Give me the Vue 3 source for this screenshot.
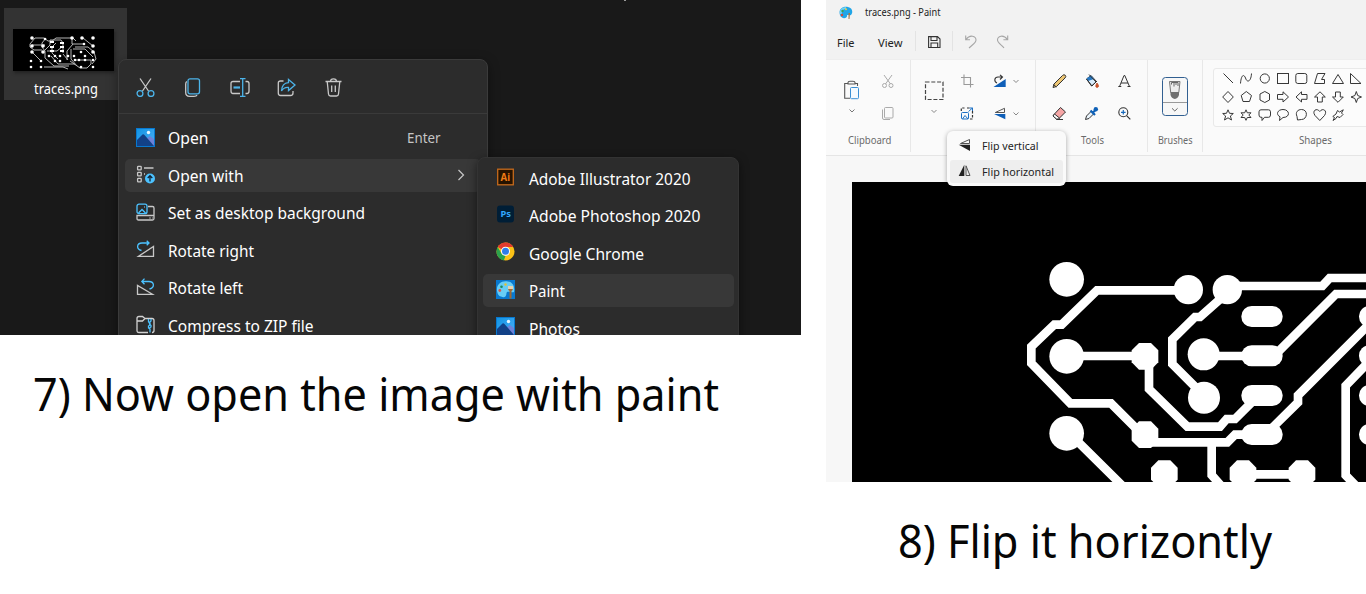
<script setup>
import { h } from 'vue'

// A single line of text fitted to an exact width.
const Fit = (p) =>
  h('svg', { class: 'fit', width: p.w, height: p.s * 1.5 }, [
    h('text', { x: 0, y: p.s * 1.107, 'font-size': p.s, textLength: p.w, lengthAdjust: 'spacingAndGlyphs' }, p.t)
  ])
Fit.props = ['t', 'w', 's']

const items = [
  { t: 'Open', w: 40.5, icon: 'photo', key: true },
  { t: 'Open with', w: 75.5, icon: 'with', active: true },
  { t: 'Set as desktop background', w: 197, icon: 'desk' },
  { t: 'Rotate right', w: 86, icon: 'right' },
  { t: 'Rotate left', w: 75, icon: 'left' },
  { t: 'Compress to ZIP file', w: 145.5, icon: 'zip' }
]
const apps = [
  { t: 'Adobe Illustrator 2020', w: 161.5, icon: 'ai' },
  { t: 'Adobe Photoshop 2020', w: 171.5, icon: 'ps' },
  { t: 'Google Chrome', w: 115, icon: 'chrome' },
  { t: 'Paint', w: 36, icon: 'paint', active: true },
  { t: 'Photos', w: 51, icon: 'photo' }
]
</script>

<template>
  <svg class="defs" width="0" height="0">
    <defs>
      <linearGradient id="sky" x1="0" y1="0" x2="1" y2="1"><stop offset="0" stop-color="#0f93e4" /><stop offset="1" stop-color="#4fb0f5" /></linearGradient>
      <symbol id="i-photo" viewBox="0 0 19 19">
        <rect width="19" height="19" fill="url(#sky)" />
        <path d="M10 11L14 8L18 11V18H10Z" fill="#6d82d8" />
        <path d="M1 12L6.500 6.500Q7.500 6 8.500 7L18 18H1Z" fill="#124187" />
        <circle cx="12.500" cy="4.500" r="1.700" fill="#e9f7ff" />
        <rect x=".5" y=".5" width="18" height="18" fill="none" stroke="#0878cf" />
      </symbol>
      <symbol id="i-with" viewBox="0 0 19 19">
        <g fill="none" stroke="#c8c8c8" stroke-width="1.300"><rect x="1.600" y="1.300" width="3.600" height="3.600" rx=".7" /><rect x="1.600" y="7.300" width="3.600" height="3.600" rx=".7" /><rect x="1.600" y="13.300" width="3.600" height="3.600" rx=".7" /><path d="M8 3H17.500M8 9H9" /></g>
        <circle cx="14" cy="13.500" r="5" fill="#4cc2ff" /><path d="M14 16.500V11M11.700 13L14 10.700L16.300 13" fill="none" stroke="#123" stroke-width="1.300" />
      </symbol>
      <symbol id="i-desk" viewBox="0 0 19 19" fill="none" stroke-width="1.300">
        <path d="M12 3.500H16.500Q18 3.500 18 5V15.500Q18 17 16.500 17H2.500Q1 17 1 15.500V12.500H18M13.500 15H14.500M16 15H16.500" stroke="#c8c8c8" />
        <rect x="1" y="1.200" width="10" height="9.500" rx="2" stroke="#4cc2ff" /><path d="M2.500 10L6 6.500L9.500 10M8 4H8.800" stroke="#4cc2ff" />
      </symbol>
      <symbol id="i-right" viewBox="0 0 19 19" fill="none" stroke-width="1.300">
        <path d="M17.500 6.500V16.300H2.500Z" stroke="#c8c8c8" /><path d="M5.500 10.500C0 9 .5 3 6 3H12.500M10.700 .8L13 3L10.700 5.200" stroke="#4cc2ff" />
      </symbol>
      <symbol id="i-left" viewBox="0 0 19 19" fill="none" stroke-width="1.300">
        <path d="M1.500 7.500V16.300H16.500Z" stroke="#c8c8c8" /><path d="M13.500 11C19 9.500 18.500 3.500 13 3.500H6M8.500 .6L5.800 3.500L8.500 6.300" stroke="#4cc2ff" />
      </symbol>
      <symbol id="i-zip" viewBox="0 0 19 19" fill="none" stroke-width="1.300">
        <path d="M12 17.500H3Q1 17.500 1 15.500V3.500Q1 1.500 3 1.500H6.500L9 3.500H16Q18 3.500 18 5.500V15.500Q18 17.500 16 17.500M1 6H6.500L9 3.500" stroke="#d2d2d2" />
        <path d="M12.500 4V7L14 8V10L12.500 11V13L14 14V17.500M15 4V6L13.500 7.500V9L15 10.500V12L13.500 13" stroke="#4cc2ff" />
      </symbol>
      <symbol id="i-ai" viewBox="0 0 19 19">
        <rect x="1.700" y="1.200" width="15.600" height="15.600" fill="#261300" stroke="#c66a1c" stroke-width="1.300" />
        <text x="4.600" y="12.700" font-size="10.500" font-weight="700" fill="#ee7b15" textLength="9.500" lengthAdjust="spacingAndGlyphs">Ai</text>
      </symbol>
      <symbol id="i-ps" viewBox="0 0 19 19">
        <rect x="1" y=".5" width="17" height="17" rx="3" fill="#001e36" />
        <text x="4.500" y="12" font-size="9.500" font-weight="700" fill="#31a8ff" textLength="10.500" lengthAdjust="spacingAndGlyphs">Ps</text>
      </symbol>
      <symbol id="i-chrome" viewBox="0 0 19 19">
        <circle cx="9.500" cy="9.500" r="9" fill="#fbc116" />
        <path d="M9.500 9.500L1.700 5A9 9 0 0 1 17.300 5H9.500Z" fill="#e33b2e" />
        <path d="M1.700 5L5.600 11.800L9.500 14L7.800 18.400A9 9 0 0 1 1.700 5Z" fill="#2ba24c" />
        <circle cx="9.500" cy="9.200" r="4.500" fill="#fff" /><circle cx="9.500" cy="9.200" r="3.500" fill="#2f7de9" />
      </symbol>
      <symbol id="i-paint" viewBox="0 0 19 19">
        <rect width="19" height="19" fill="#0878cf" />
        <path d="M1 11C0 4 6 0 12 1.500C17 2 19 7 18 12C15 13 11 10 10.500 13C10.500 17 8 18 5 16.500C2 16 1.500 13 1 11Z" fill="#67cdf5" />
        <circle cx="3.800" cy="10.500" r="1.400" fill="#d5574c" /><circle cx="5.500" cy="6.800" r="1.300" fill="#1c8b60" /><circle cx="9.500" cy="4.500" r="1.200" fill="#e7bf31" />
        <path d="M12.300 8H16.700V10L15.500 11V18.500H13.500V11L12.300 10Z" fill="#a16a33" /><path d="M12 6H17V9H12Z" fill="#e3d1b0" />
      </symbol>
    </defs>
  </svg>
  <div class="page">
    <section class="left">
      <div class="explorer">
        <div class="file">
          <svg class="thumb" width="101" height="42" viewBox="0 0 101 42">
            <rect width="101" height="42" fill="#000" />
            <g fill="none" stroke="#b4b4b4" stroke-width="1">
              <path d="M59 9H43L39 12H35L31 9H22L17 15V18L21 21H29M19 16H32M19 23L28 32M30 23L37 16V11H48L50 14V24M33 9L29 14V18L32 22L32 29L41 37H56M34 22H44L50 17M50 25L55 31M59 9V15H72M60 9L63 12M54 31V22L60 15M70 9L80 17M57 32L67 39H74L78 35V31H63M62 18H75L81 23L83 30L79 35M60 20H72L80 28M38 27L45 35H62M31 38H50L55 40M58 20V30L64 37M43 14L39 18V24L45 30" />
            </g>
            <g fill="#fff">
              <circle v-for="c in [[19,9],[59,9],[69,9],[80,9],[19,17],[30,17],[19,23],[30,23],[80,17],[80,23]]" :key="c.join()" :cx="c[0]" :cy="c[1]" r="1.800" />
              <circle v-for="c in [[32,10],[71,15],[18,32],[28,32],[18,38],[28,38],[36,27],[42,27],[47,27],[55,27],[61,27],[42,32],[47,32],[62,31],[66,31],[72,31],[72,27],[68,23],[68,38],[80,38],[80,31]]" :key="'s' + c.join()" :cx="c[0]" :cy="c[1]" r="1.300" />
              <path d="M37 12H41V14H37ZM37 17H41V19H37ZM37 21H41V23H37ZM47 13H51V15H47ZM47 17H51V19H47ZM47 21H51V23H47Z" />
            </g>
          </svg>
          <Fit t="traces.png" :w="64" :s="14.5" />
        </div>
        <i class="speck" />
        <div class="menu">
          <div class="tools">
            <svg width="19" height="19" viewBox="0 0 19 19" fill="none" stroke-width="1.300"><path d="M4 .5L12.500 13M15 .5L6.500 13" stroke="#c8c8c8" /><circle cx="4" cy="15.500" r="2.900" stroke="#4cb4ea" /><circle cx="15" cy="15.500" r="2.900" stroke="#4cb4ea" /></svg>
            <svg width="19" height="19" viewBox="0 0 19 19" fill="none" stroke-width="1.300"><path d="M4 3.500Q2.700 4 2.700 6V14.500Q2.700 18.300 6.500 18.300H11Q13.500 18.300 14 17" stroke="#c8c8c8" /><rect x="5" y=".8" width="11.500" height="15" rx="2" stroke="#4cb4ea" /></svg>
            <svg width="20" height="19" viewBox="0 0 20 19" fill="none" stroke-width="1.300"><path d="M10 3.500H3Q1 3.500 1 5.500V13Q1 15.500 3 15.500H10M15.500 3.500H17Q19 3.500 19 5.500V13Q19 15.500 17 15.500H15.500" stroke="#c8c8c8" /><path d="M10 .7H15.500M12.700 .7V18.300M10 18.300H15.500" stroke="#4cb4ea" /><path d="M3.500 9.500H10" stroke="#4cb4ea" stroke-width="2.200" /></svg>
            <svg width="19" height="19" viewBox="0 0 19 19" fill="none" stroke-width="1.300"><path d="M6.500 3H3.500Q1.300 3 1.300 5V15Q1.300 17.500 3.500 17.500H13.500Q16 17.500 16 15V13" stroke="#c8c8c8" /><path d="M11.500 1.500L18 7L11.500 12.500V9.500Q7 9 4.500 13Q5 5 11.500 4.700Z" stroke="#4cb4ea" /></svg>
            <svg width="19" height="19" viewBox="0 0 19 19" fill="none" stroke="#c8c8c8" stroke-width="1.300"><path d="M1.500 3.500H17.500M6.500 3.500Q6.500 .8 9.500 .8Q12.500 .8 12.500 3.500M3.200 3.500L4.500 16Q4.700 18 6.500 18H12.500Q14.300 18 14.500 16L15.800 3.500M7.700 7.500V14M11.300 7.500V14" /></svg>
          </div>
          <div class="rows">
            <div v-for="r in items" :key="r.t" class="row">
              <div :class="['cell', { active: r.active }]">
                <svg class="ico" width="19" height="19"><use :href="'#i-' + r.icon" /></svg>
                <Fit class="name" :t="r.t" :w="r.w" :s="16.5" />
                <Fit v-if="r.key" class="hint" t="Enter" :w="33.5" :s="15" />
                <svg v-if="r.active" class="chev" width="8" height="12"><path d="M1.500 1L6.500 6L1.500 11" fill="none" stroke="#c8c8c8" stroke-width="1.200" /></svg>
              </div>
            </div>
          </div>
        </div>
        <div class="sub">
          <div v-for="r in apps" :key="r.t" class="row">
            <div :class="['cell', { active: r.active }]">
              <svg class="ico" width="19" height="19"><use :href="'#i-' + r.icon" /></svg>
              <Fit class="name" :t="r.t" :w="r.w" :s="16.5" />
            </div>
          </div>
        </div>
      </div>
      <div class="caption one"><Fit t="7) Now open the image with paint" :w="686" :s="45.5" /></div>
    </section>

    <section class="right">
      <div class="paint">
        <header class="title">
          <svg width="14" height="14" viewBox="0 0 14 14"><path d="M1 9C-1 3 4 0 9 1C14 2 14 7 12 9C10 10 8 8 8 10C8 13 2 13 1 9Z" fill="#20a5e7" /><path d="M2 8C1 4 4 2 7 2" fill="none" stroke="#70d3f5" stroke-width="2" /><circle cx="3" cy="9" r="1.200" fill="#d64939" /><circle cx="3.500" cy="5" r="1.200" fill="#3d9e58" /><circle cx="7" cy="3.300" r="1" fill="#f0cb42" /><path d="M9.500 7L11 7L10.500 13H9.500Z" fill="#a47749" /></svg>
          <Fit t="traces.png - Paint" :w="75.5" :s="10.2" />
        </header>
        <nav class="bar">
          <Fit class="m1" t="File" :w="17.5" :s="11.3" />
          <Fit class="m2" t="View" :w="24.5" :s="11.3" />
          <svg class="quick" width="110" height="24" viewBox="910 30 110 24" fill="none">
            <path d="M915.500 31V51M952.500 31V51" stroke="#e3e3e3" />
            <path d="M928.600 36.600H937.500L940 39V47.500H928.600ZM931 36.600V40.500H937V36.600M931 47.500V43H937.700V47.500" stroke="#333" stroke-width="1.100" />
            <g stroke="#a6a6a6" stroke-width="1.100"><path d="M965.700 35.500V39.700H970M966 39.500C970 34 976 36 976 40C976 43 972 45 969 48" /><path d="M1007.700 35.500V39.700H1003.400M1007.400 39.500C1003.400 34 997.500 36 997.500 40C997.500 43 1002 45 1004 48" /></g>
          </svg>
        </nav>
        <div class="ribbon">
          <div class="group clip">
            <svg width="84" height="72" viewBox="826 60 84 72" fill="none">
              <path d="M848 83.500H844.700V98.300H850M855 83.500H857.500V86M848 82.500Q848 81.300 850 81.300H853Q855 81.300 855 82.500V84H848Z" stroke="#555" stroke-width="1.100" /><rect x="850.500" y="87.500" width="8" height="11.200" rx="1" fill="#f4faff" stroke="#398fd5" />
              <path d="M849.500 109.500L852 112L854.500 109.500" stroke="#777" />
              <g stroke="#aaa"><path d="M884 75L890.500 84M892 75L885.500 84" /><circle cx="884.500" cy="85.500" r="2" /><circle cx="891" cy="85.500" r="2" /><rect x="884.500" y="107.500" width="8.500" height="10.500" rx="1" /><path d="M882.500 109.500V118Q882.500 119.500 884 119.500H890" /></g>
            </svg>
            <Fit class="clip-label" t="Clipboard" :w="43.5" :s="10.3" />
          </div>
          <div class="group image">
            <svg width="124" height="72" viewBox="911 60 124 72" fill="none">
              <rect x="925.500" y="82" width="17.500" height="17.500" stroke="#444" stroke-width="1.200" stroke-dasharray="4 1.800" />
              <path d="M931.500 110L934 112.500L936.500 110M1013.500 80L1016 82.500L1018.500 80M1013.500 112.500L1016 115L1018.500 112.500" stroke="#888" />
              <path d="M964 74.500V84.500H973.500M961 77.500H970.500V87.500" stroke="#999" stroke-width="1.100" />
              <path d="M993.500 87L1005.700 79V87Z" fill="#0f5fb8" /><path d="M997 83C993.500 81.500 994.500 77 998 77H1002M1000 74.800L1002.500 77L1000 79.500" stroke="#333" stroke-width="1.100" />
              <path d="M961.300 111V108H964.500M967 108H970M972.500 111V118.500M970 119H973" stroke="#333" stroke-width="1.200" stroke-dasharray="2.500 1.400" /><rect x="961.500" y="112.500" width="7" height="6.500" rx="1" stroke="#1c70c4" /><path d="M962.500 119L965 115.500L968 119M968.500 111.500L972.500 108M969.500 108H972.500V111" stroke="#1c70c4" />
              <path d="M995.300 112.500L1004.500 108.300V112.500Z" stroke="#555" /><path d="M994 114H1005.300V119.300Z" fill="#0f5fb8" />
            </svg>
          </div>
          <div class="group toolset">
            <svg width="111" height="72" viewBox="1036 60 111 72" fill="none" stroke="#333" stroke-linejoin="round">
              <path d="M1053 87.500L1054 84L1062.500 75.500Q1064 74 1065.300 75.300Q1066.500 76.500 1065 78L1056.500 86.500Z" fill="#edc674" /><path d="M1053.500 84.500L1056.300 87" />
              <path d="M1086.500 79L1091 75.500L1096.500 81.500L1091.500 86Z" fill="#d9edfc" /><path d="M1086.500 78.500L1091 75.500L1094 79L1088 81Z" fill="#2779c4" stroke="none" /><path d="M1089 74.500L1096 82M1086.500 79L1092 86L1097 81" /><path d="M1097 83Q1094.500 87 1097 87.500Q1100 87 1097 83Z" fill="#d75629" stroke="#b14420" stroke-width=".7" />
              <path d="M1119.500 86.500L1124 75.500H1124.800L1129.500 86.500M1121 83H1128M1118.300 86.500H1121.300M1127.500 86.500H1130.500" />
              <path d="M1054 114.500L1060.500 107.500L1065.500 112L1058.500 119H1056.500L1053 116Z" fill="#f6a5a5" /><path d="M1054.500 114L1059.500 118L1058.500 119H1056.500L1053 116Z" fill="#fff" /><path d="M1056.500 119.500H1063" />
              <path d="M1085.500 119.500L1086.500 116L1091.500 111L1094 113.500L1089 118.500Z" fill="#eaf4fc" /><path d="M1090.500 110.500L1095 115M1093 112.500L1096.500 109" stroke="#0f61b7" stroke-width="2.200" /><circle cx="1095.800" cy="109.300" r="2.200" fill="#0f61b7" stroke="none" />
              <circle cx="1123.300" cy="112.300" r="4.500" stroke-width="1.100" /><path d="M1126.800 115.800L1130.300 119.300" stroke-width="1.200" /><path d="M1121 112.300H1125.600M1123.300 110V114.600" stroke="#1769bb" stroke-width="1.200" />
            </svg>
            <Fit class="tool-label" t="Tools" :w="23" :s="10.3" />
          </div>
          <div class="group brush">
            <svg width="54" height="72" viewBox="1148 60 54 72" fill="none">
              <rect x="1162.500" y="77.500" width="25" height="38" rx="3" fill="#f7f7f7" stroke="#315f91" /><path d="M1163 102.500H1187" stroke="#999" />
              <path d="M1169.500 81.500H1180L1178.800 92.500H1170.700Z" fill="#ececec" stroke="#777" /><path d="M1171.500 84.500V82.500H1178V86M1174 83V86.500M1176 83V85" stroke="#666" /><path d="M1170.500 92H1179V95Q1178 98.500 1174.800 99Q1171.500 98.500 1170.500 95Z" fill="#707070" />
              <path d="M1172 108.300L1174.800 111L1177.600 108.300" stroke="#666" />
            </svg>
            <Fit t="Brushes" :w="34.5" :s="10.3" />
          </div>
          <div class="group shapes">
            <svg width="163" height="72" viewBox="1203 60 163 72" fill="none" stroke="#383838">
              <path d="M1370 68.500H1216Q1213.500 68.500 1213.500 71V124Q1213.500 126.500 1216 126.500H1370" stroke="#e9e9e9" fill="#fcfcfc" />
              <path d="M1223.500 73.500L1233 83" /><path d="M1240.500 83.500C1241 76 1243.500 73 1245.500 78C1247 83 1251 82 1251.500 73.500" />
              <circle cx="1264.800" cy="78.500" r="4.600" /><rect x="1277.500" y="73.500" width="11" height="10" /><rect x="1295.800" y="73.500" width="11" height="10" rx="2" />
              <path d="M1314.500 83.500L1317.500 73.500H1325L1321.500 79.500H1324.500V83.500Z" /><path d="M1332.500 83.500L1338 74.500L1343.500 83.500Z" /><path d="M1350.500 73.500V83.500H1361Z" />
              <path d="M1228 91.500L1233.300 97L1228 102.500L1222.700 97Z" /><path d="M1246.300 91.500L1251.500 95.500L1249.500 101.500H1243L1241.200 95.500Z" /><path d="M1264.800 91.500L1269.500 94V100L1264.800 102.500L1260 100V94Z" />
              <path d="M1277.500 94.500H1283V91.800L1288.500 97L1283 102V99.300H1277.500Z" /><path d="M1307 94.500H1301.500V91.800L1296 97L1301.500 102V99.300H1307Z" /><path d="M1317.500 102V97H1314.500L1320 91.800L1325.300 97H1322.300V102Z" /><path d="M1335.500 92V97H1332.500L1338 102.300L1343.300 97H1340.300V92Z" /><path d="M1356.300 91.500L1357.700 95.500L1361.500 97L1357.700 98.500L1356.300 102.500L1354.900 98.500L1351 97L1354.900 95.500Z" />
              <path d="M1228 109.800L1229.500 113.300L1233.300 113.500L1230.400 116L1231.500 120L1228 117.800L1224.500 120L1225.600 116L1222.700 113.500L1226.500 113.300Z" /><path d="M1246 109.800L1247.300 112.800H1251L1248.800 115L1251 117.500H1247.300L1246 120.300L1244.700 117.500H1241L1243.200 115L1241 112.800H1244.700Z" />
              <path d="M1261 109.800H1268.500Q1270.500 109.800 1270.500 111.800V115Q1270.500 117.300 1268.500 117.300H1264.500L1262 120.500V117.300H1261Q1259 117.300 1259 115V111.800Q1259 109.800 1261 109.800Z" />
              <path d="M1280 116.800C1275.500 114.500 1277.500 109.500 1283 109.500C1290 109.500 1290.500 117.500 1283 117.500L1279.500 120.500Z" /><path d="M1297 116.500C1295 112 1298 109.500 1301.500 109.500C1308.500 109.500 1307.500 119.500 1301.500 119.500L1297.500 120Z" />
              <path d="M1319.800 120.500L1315 115.500C1311.500 110.500 1317 107.500 1319.800 111.500C1322.500 107.500 1328 110.500 1324.500 115.500Z" /><path d="M1337.500 110.500L1339.500 112L1343.300 109.800L1341.500 113L1343 114.500L1340 117.500L1337 116.500L1336 118.500L1333 120.500L1334.500 117.500L1332.800 116.500L1336 114Z" />
            </svg>
            <Fit class="shapes-label" t="Shapes" :w="33" :s="10.3" />
          </div>
        </div>
        <div class="workspace">
          <svg class="board" width="514" height="300" viewBox="0 0 514 300">
            <rect width="514" height="300" fill="#000" />
            <g transform="translate(158 58) scale(.33333)">
              <g fill="none" stroke="#fff" stroke-width="26">
                <path d="M535 151H261L155 254H133L64 320V370L181 490H303L400 587" />
                <path d="M170 348H405M170 572L350 750" />
                <path d="M652 138H937L959 114H1080" />
                <path d="M652 158L570 231H555L487 298V372L575 460" />
                <path d="M581 348H740M790 350L978 162H1080" />
                <path d="M417 370V447L532 560H630L650 537H675L740 472" />
                <path d="M415 607H652L675 584H750" />
                <path d="M780 570L864 487V466L1080 250" />
                <path d="M605 607V705L640 745M1080 362L1007 437V706L1050 750M699 703H876" />
              </g>
              <g fill="#fff">
                <circle cx="170" cy="118" r="52" /><circle cx="535" cy="149" r="44" /><circle cx="652" cy="149" r="44" /><circle cx="170" cy="349" r="52" /><circle cx="581" cy="343" r="48" /><circle cx="582" cy="473" r="48" /><circle cx="170" cy="580" r="52" />
                <path v-for="p in [[405,349],[405,584],[463,701],[699,701],[876,701]]" :key="p.join()" :transform="'translate(' + p + ')'" d="M-18-40H18L40-18V18L18 40H-18L-40 18V-18Z" />
                <rect v-for="y in [198, 316, 435, 552]" :key="y" x="694" :y="y" width="124" height="63" rx="31" />
                <rect v-for="y in [198, 316, 435, 552]" :key="'r' + y" x="1047" :y="y" width="124" height="63" rx="31" />
              </g>
            </g>
          </svg>
        </div>
        <div class="popup">
          <div class="opt"><svg width="14" height="14" fill="none"><path d="M2.500 5.500L11.500 1.500V5.500Z" stroke="#555" /><path d="M.7 6.800H12V13Z" fill="#222" /></svg><Fit t="Flip vertical" :w="56.5" :s="10.6" /></div>
          <div class="opt on"><svg width="14" height="14" fill="none"><path d="M6.300 .8V12H.7Z" fill="#222" /><path d="M8 1.800L12 11.500H8Z" stroke="#555" /></svg><Fit t="Flip horizontal" :w="72" :s="10.6" /></div>
        </div>
      </div>
      <div class="caption two"><Fit t="8) Flip it horizontly" :w="374" :s="45.5" /></div>
    </section>
  </div>
</template>

<style>
html, body { margin: 0; background: #fff; overflow: hidden; }
</style>

<style scoped>
.defs { position: absolute; }
.page { display: flex; gap: 25px; width: 1366px; height: 594px; overflow: hidden; font-family: "Noto Sans", "Open Sans", sans-serif; color: #000; }
.page svg { display: block; flex: none; }
.fit { overflow: visible; fill: currentColor; }
.left { width: 801px; }
.right { width: 540px; }
.explorer { position: relative; box-sizing: border-box; height: 334.500px; background: #191919; overflow: hidden; padding: 8px 0 0 4px; color: #fff; }
.file { box-sizing: border-box; width: 123px; height: 92px; background: #333; display: flex; flex-direction: column; align-items: center; padding-top: 21px; }
.file .thumb { margin-right: 4px; box-shadow: 1px 2px 3px #222; }
.file .fit { margin-top: 7px; margin-left: 1px; }
.speck { position: absolute; left: 624px; top: 0; width: 2px; height: 1px; background: #999; }
.menu { position: absolute; left: 118px; top: 59px; width: 368px; height: 300px; border: 1px solid #3b3b3b; border-radius: 8px; background: #2c2c2c; box-shadow: 0 3px 12px #0006; }
.tools { display: flex; gap: 27.800px; box-sizing: border-box; height: 54px; padding: 18px 0 0 17px; border-bottom: 1px solid #3a3a3a; }
.rows { padding-top: 5px; }
.row { height: 37.500px; display: flex; align-items: center; }
.cell { display: flex; align-items: center; height: 33px; margin: 0 6px; padding-left: 11px; width: 100%; border-radius: 5px; }
.active { background: #383838; }
.ico { margin: -1px 13px 0 0; }
.rows .name { margin-top: 1.500px; }
.hint { margin-left: 198px; margin-top: -1px; color: #c5c5c5; }
.chev { margin-left: 213px; }
.sub { position: absolute; left: 477px; top: 157px; box-sizing: border-box; width: 262px; height: 220px; padding-top: 2px; border: 1px solid #333; border-radius: 8px; background: #2c2c2c; box-shadow: 0 3px 10px #0008; }
.sub .cell { margin: 0 4px 0 5px; padding-left: 13px; }
.sub .row { height: 37.400px; }
.sub .ico { margin: -3px 14px 0 0; }
.sub .name { margin-top: 1.500px; }
.caption { display: flex; color: #060606; }
.one { padding: 26px 0 0 33px; }
.two { padding: 26px 0 0 72px; }
.paint { position: relative; height: 481.500px; overflow: hidden; background: #f7f7f7; color: #222; }
.title { box-sizing: border-box; height: 25px; display: flex; align-items: center; gap: 12px; padding-left: 13px; background: #f2f2f2; }
.bar { height: 34px; display: flex; align-items: center; background: #f2f2f2; padding-left: 11px; }
.m2 { margin-left: 23px; }
.quick { margin: -1px 0 0 7.500px; }
.ribbon { box-sizing: border-box; height: 97px; display: flex; background: #fafafa; border-top: 1px solid #eee; border-bottom: 1px solid #e5e5e5; }
.group { display: flex; flex-direction: column; align-items: center; color: #6a6a6a; height: 92px; border-right: 1px solid #e8e8e8; }
.group:last-child { border-right: 0; }
.group .fit { margin-top: 1px; }
.group .clip-label { margin-left: 3px; }
.group .tool-label { margin-left: 1px; }
.shapes-label { margin-left: 61px; }
.workspace { padding: 26px 0 0 26px; }
.popup { position: absolute; left: 121px; top: 131px; width: 119px; height: 55px; box-sizing: border-box; padding: 3px; border-radius: 6px; background: #fafafa; box-shadow: 0 1px 5px #0005; }
.opt { display: flex; align-items: center; gap: 10px; height: 24px; margin-bottom: 2px; padding-left: 8px; border-radius: 3px; }
.opt svg:first-child { margin-top: -2px; }
.opt.on { background: #eee; height: 23px; }
</style>
